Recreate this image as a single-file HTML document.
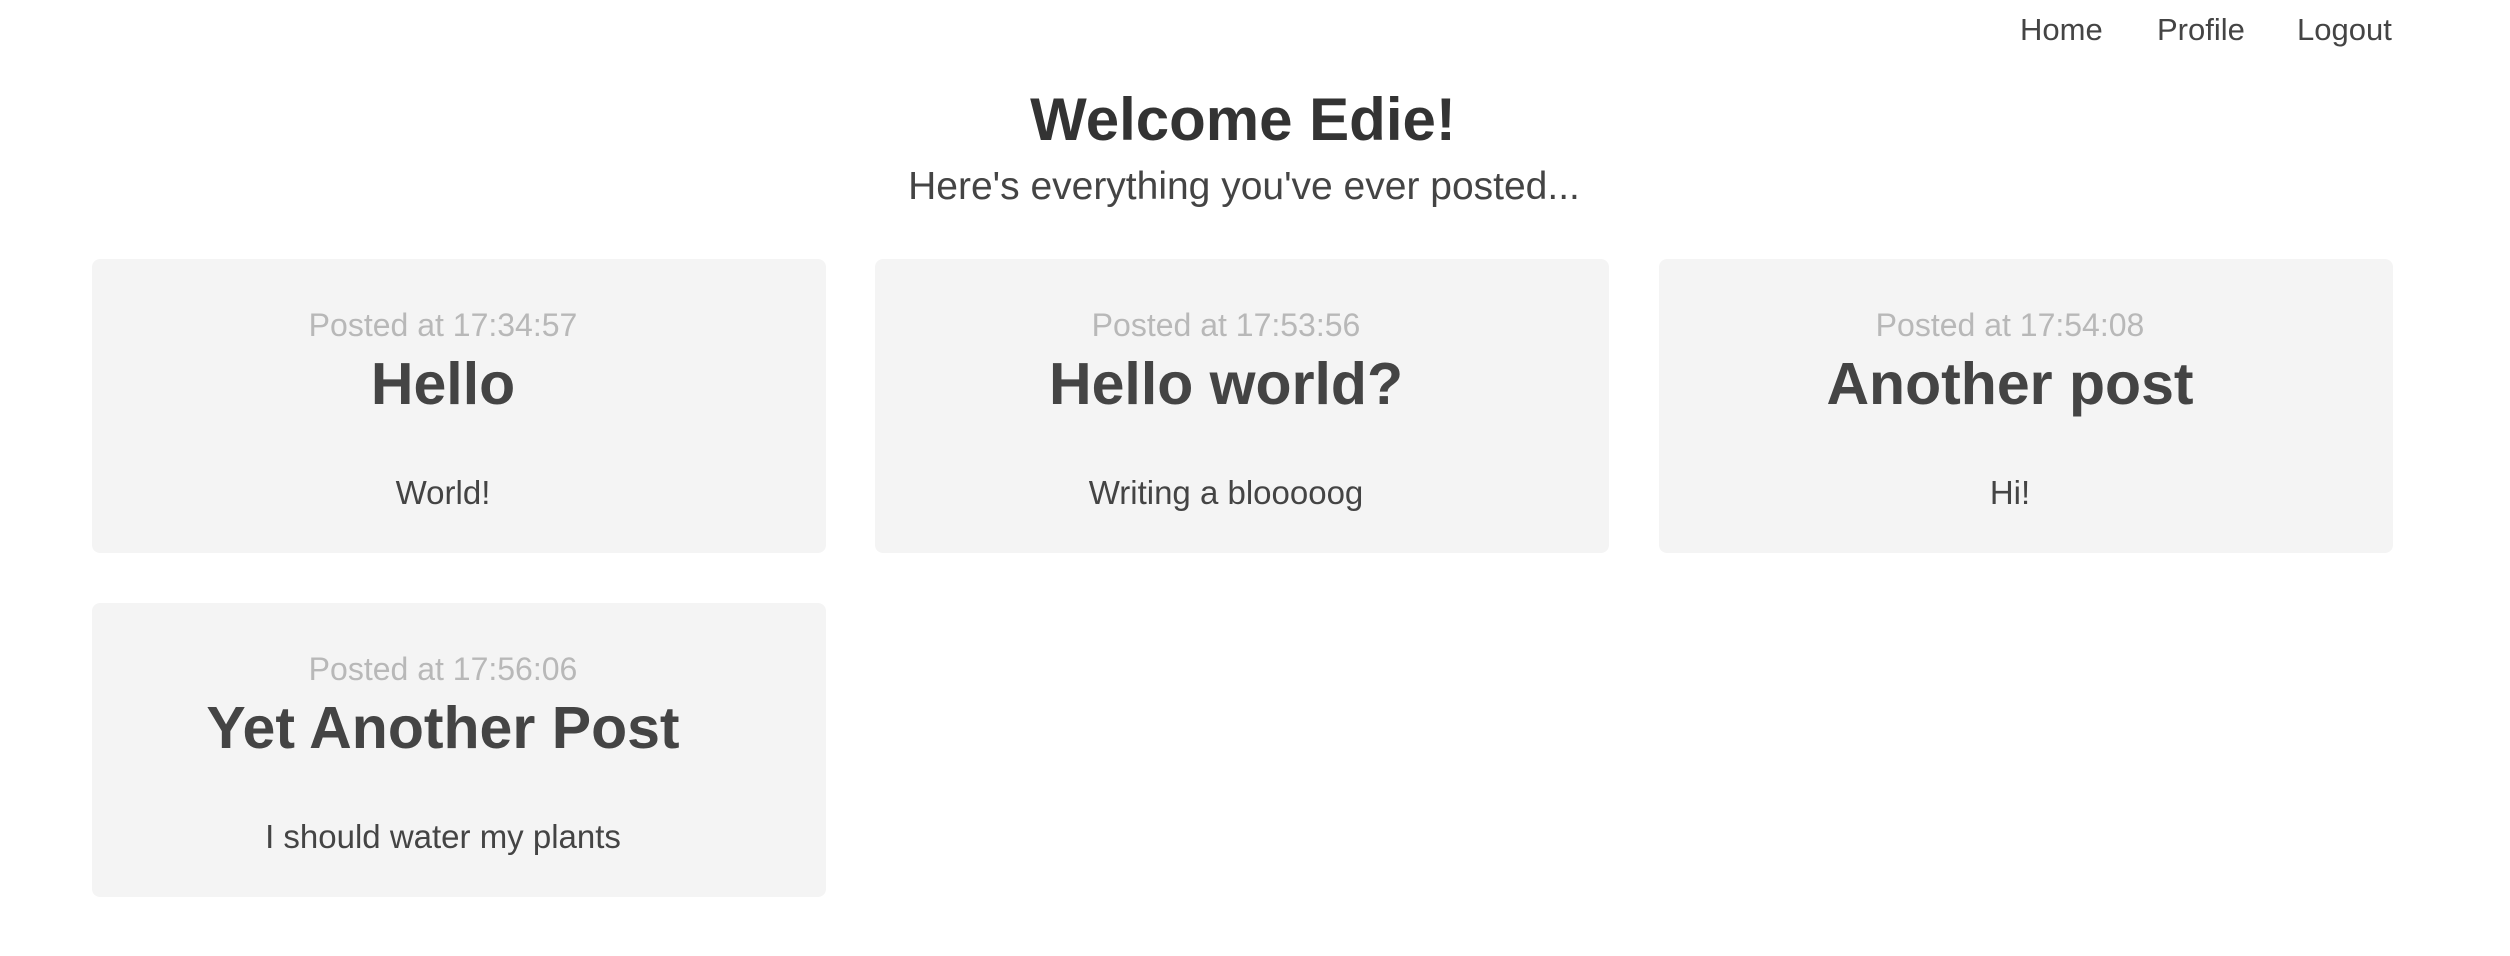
<!DOCTYPE html>
<html><head><meta charset="utf-8"><style>
body{margin:0;width:2510px;height:956px;background:#fff;font-family:"Liberation Sans",sans-serif;position:relative;overflow:hidden}
.a{position:absolute;line-height:1;white-space:nowrap}
.nav{font-size:31px;color:#444;top:14px}
.card{position:absolute;width:734px;height:294px;background:#f4f4f4;border-radius:8px}
.card div{position:absolute;left:0;right:32px;text-align:center;line-height:1;white-space:nowrap}
.p{top:50px;font-size:32px;color:#b8b8b8}
.t{top:96px;font-size:59px;color:#444;font-weight:600}
.b{top:217px;font-size:33px;color:#444}
</style></head><body>
<div class="a nav" style="left:2020px">Home</div>
<div class="a nav" style="left:2157px">Profile</div>
<div class="a nav" style="left:2297px">Logout</div>
<div class="a" style="left:0;right:24px;text-align:center;top:90px;font-size:60px;font-weight:bold;color:#333">Welcome Edie!</div>
<div class="a" style="left:0;right:22px;text-align:center;top:167px;font-size:39px;color:#444">Here's everything you've ever posted...</div>
<div class="card" style="left:92px;top:259px"><div class="p">Posted at 17:34:57</div><div class="t">Hello</div><div class="b">World!</div></div>
<div class="card" style="left:875px;top:259px"><div class="p">Posted at 17:53:56</div><div class="t">Hello world?</div><div class="b">Writing a blooooog</div></div>
<div class="card" style="left:1659px;top:259px"><div class="p">Posted at 17:54:08</div><div class="t">Another post</div><div class="b">Hi!</div></div>
<div class="card" style="left:92px;top:603px"><div class="p">Posted at 17:56:06</div><div class="t">Yet Another Post</div><div class="b">I should water my plants</div></div>
</body></html>
